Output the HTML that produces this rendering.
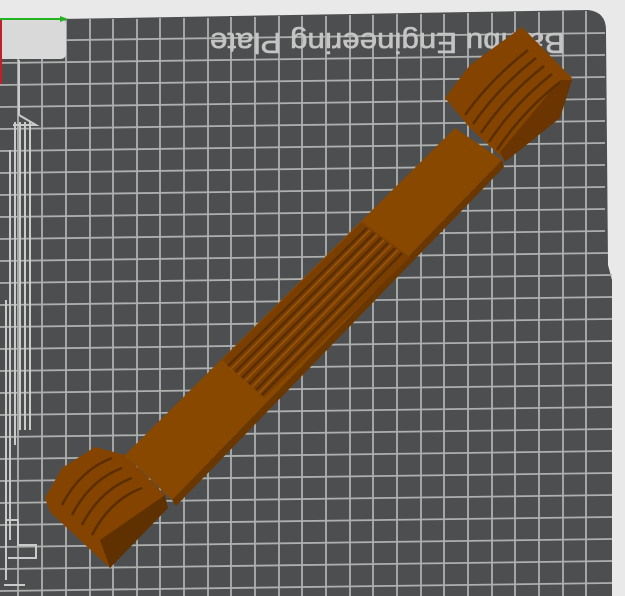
<!DOCTYPE html>
<html><head><meta charset="utf-8"><style>
html,body{margin:0;padding:0;width:625px;height:596px;overflow:hidden;background:#e9e9e9}
svg{display:block}
</style></head><body>
<svg width="625" height="596" viewBox="0 0 625 596" xmlns="http://www.w3.org/2000/svg">
<rect width="625" height="596" fill="#e9e9e9"/>
<path d="M0 20 L588 10 Q606 12 606 30 L608 265 L612 280 L612 596 L0 596 Z" fill="#4c4e4f"/>
<g stroke="#aeb0b0" stroke-width="1.8">
<line x1="18" y1="20" x2="18" y2="596"/><line x1="42" y1="20" x2="42" y2="596"/><line x1="66" y1="20" x2="66" y2="596"/><line x1="90" y1="19" x2="90" y2="596"/><line x1="113" y1="19" x2="113" y2="596"/><line x1="137" y1="19" x2="137" y2="596"/><line x1="160" y1="18" x2="160" y2="596"/><line x1="184" y1="18" x2="184" y2="596"/><line x1="208" y1="18" x2="208" y2="596"/><line x1="231" y1="17" x2="231" y2="596"/><line x1="255" y1="17" x2="255" y2="596"/><line x1="279" y1="16" x2="279" y2="596"/><line x1="302" y1="16" x2="302" y2="596"/><line x1="326" y1="16" x2="326" y2="596"/><line x1="350" y1="15" x2="350" y2="596"/><line x1="373" y1="15" x2="373" y2="596"/><line x1="397" y1="14" x2="397" y2="596"/><line x1="421" y1="14" x2="421" y2="596"/><line x1="444" y1="14" x2="444" y2="596"/><line x1="468" y1="13" x2="468" y2="596"/><line x1="492" y1="13" x2="492" y2="596"/><line x1="515" y1="12" x2="515" y2="596"/><line x1="539" y1="12" x2="539" y2="596"/><line x1="563" y1="11" x2="563" y2="596"/><line x1="586" y1="11" x2="586" y2="596"/>
<line x1="0" y1="41" x2="605" y2="33"/><line x1="0" y1="63" x2="605" y2="55"/><line x1="0" y1="85" x2="605" y2="77"/><line x1="0" y1="107" x2="605" y2="99"/><line x1="0" y1="129" x2="605" y2="121"/><line x1="0" y1="151" x2="605" y2="143"/><line x1="0" y1="173" x2="605" y2="165"/><line x1="0" y1="195" x2="605" y2="187"/><line x1="0" y1="217" x2="605" y2="209"/><line x1="0" y1="239" x2="605" y2="231"/><line x1="0" y1="261" x2="608" y2="253"/><line x1="0" y1="283" x2="612" y2="275"/><line x1="0" y1="305" x2="612" y2="297"/><line x1="0" y1="327" x2="612" y2="319"/><line x1="0" y1="349" x2="612" y2="341"/><line x1="0" y1="371" x2="612" y2="363"/><line x1="0" y1="393" x2="612" y2="385"/><line x1="0" y1="415" x2="612" y2="407"/><line x1="0" y1="437" x2="612" y2="429"/><line x1="0" y1="459" x2="612" y2="451"/><line x1="0" y1="481" x2="612" y2="473"/><line x1="0" y1="503" x2="612" y2="495"/><line x1="0" y1="525" x2="612" y2="517"/><line x1="0" y1="547" x2="612" y2="539"/><line x1="0" y1="569" x2="612" y2="561"/><line x1="0" y1="591" x2="612" y2="583"/>
</g>
<rect x="-6" y="19" width="72" height="40" rx="5" fill="#d9d9d9"/>
<line x1="0" y1="19" x2="62" y2="19" stroke="#22b322" stroke-width="2"/>
<path d="M60 16 L68 19 L60 22Z" fill="#22b322"/>
<rect x="0" y="20" width="2" height="64" fill="#c0202a"/>
<g stroke="#c9cbcb" stroke-width="2" fill="none">
<path d="M19 60 L19 115 L36 125 L13 125"/>
<line x1="15" y1="122" x2="15" y2="445"/><line x1="20" y1="122" x2="20" y2="430"/><line x1="25" y1="122" x2="25" y2="430"/><line x1="30" y1="122" x2="30" y2="430"/>
<line x1="10" y1="150" x2="10" y2="540"/><line x1="6" y1="300" x2="6" y2="580"/>
<path d="M5 520 L18 520 L18 545 L36 545 L36 558 L8 558"/>
<path d="M4 585 L25 585"/>
</g>
<text x="0" y="0" transform="translate(565,33) rotate(180)" font-family="Liberation Sans, sans-serif" font-size="29" textLength="355" lengthAdjust="spacingAndGlyphs" fill="#c4c4c4" stroke="#c4c4c4" stroke-width="0.6">Bambu Engineering Plate</text>
<!-- strip -->
<polygon points="125,455 455,128 502,160 172,500" fill="#884800"/>
<polygon points="172,500 502,160 504,167 176,506" fill="#6b3700"/>
<!-- ridged mid section -->
<polygon points="222,360 362,222 410,257 264,398" fill="#7a3f00"/>
<g stroke="#5a2e00" stroke-width="2.5">
<line x1="228" y1="366" x2="367" y2="228"/><line x1="235" y1="372" x2="374" y2="233"/><line x1="242" y1="378" x2="381" y2="238"/><line x1="249" y1="384" x2="388" y2="243"/><line x1="256" y1="390" x2="395" y2="248"/><line x1="262" y1="395" x2="402" y2="253"/>
</g>
<g stroke="#9a5410" stroke-width="1.5">
<line x1="231" y1="369" x2="370" y2="230"/><line x1="238" y1="375" x2="377" y2="235"/><line x1="245" y1="381" x2="384" y2="240"/><line x1="252" y1="387" x2="391" y2="245"/><line x1="259" y1="393" x2="398" y2="250"/>
</g>
<!-- top-right block -->
<polygon points="445,98 470,65 522,27 572,78 560,112 505,160 470,128" fill="#844400"/>
<polygon points="560,80 572,80 560,118 505,162 500,152" fill="#6a3500"/>
<g stroke="#5a2e00" stroke-width="2.5" fill="none">
<path d="M465 115 Q490 80 528 50"/><path d="M473 124 Q498 88 536 58"/><path d="M481 133 Q506 96 544 66"/><path d="M489 142 Q514 104 552 74"/><path d="M497 150 Q522 112 560 82"/>
</g>
<!-- bottom-left block -->
<polygon points="45,498 62,468 95,447 125,455 165,495 110,568 50,512" fill="#844400"/>
<polygon points="100,540 165,495 168,508 110,568" fill="#5f3000"/>
<g stroke="#5a2e00" stroke-width="2.5" fill="none">
<path d="M62 505 Q80 470 112 458"/><path d="M72 515 Q90 480 122 468"/><path d="M82 525 Q100 490 132 478"/><path d="M92 535 Q110 500 142 488"/>
</g>
</svg>
</body></html>
